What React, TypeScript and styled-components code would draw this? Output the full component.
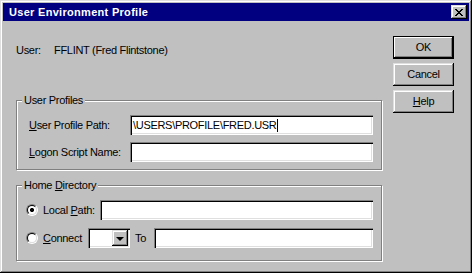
import React from "react";
import styled, { createGlobalStyle } from "styled-components";

const Global = createGlobalStyle`
  html, body { margin: 0; padding: 0; background: #ffffff; }
  body {
    font-family: "Liberation Sans", Arial, sans-serif;
    font-size: 11px;
    letter-spacing: -0.3px;
    color: #000;
  }
`;

const bevelOut = `
  box-shadow: inset -1px -1px 0 #000, inset 1px 1px 0 #dfdfdf,
    inset -2px -2px 0 #808080, inset 2px 2px 0 #fff;
`;
const bevelIn = `
  box-shadow: inset 1px 1px 0 #808080, inset 2px 2px 0 #000,
    inset -1px -1px 0 #fff, inset -2px -2px 0 #dfdfdf;
`;

const Window = styled.div`
  box-sizing: border-box;
  width: 472px;
  height: 273px;
  padding: 3px;
  background: #c0c0c0;
  display: flex;
  flex-direction: column;
  ${bevelOut}
`;

const TitleBar = styled.div`
  height: 18px;
  background: #000080;
  display: flex;
  align-items: center;
  justify-content: space-between;
  padding: 0 2px 0 6px;
`;

const Title = styled.span`
  color: #fff;
  font-weight: bold;
  font-size: 11px;
  letter-spacing: 0.3px;
  line-height: 13px;
`;

const CloseBtn = styled.div`
  width: 16px;
  height: 14px;
  background: #c0c0c0;
  display: flex;
  align-items: center;
  justify-content: center;
  ${bevelOut}
`;

const Body = styled.div`
  display: flex;
  gap: 11px;
  padding: 15px 0 0 13px;
`;

const LeftCol = styled.div`
  width: 366px;
  display: flex;
  flex-direction: column;
`;

const UserRow = styled.div`
  display: flex;
  padding-top: 8px;
  line-height: 13px;
`;

const UserLabel = styled.span`
  width: 38px;
`;

const Group = styled.fieldset<{ $top: number }>`
  margin: ${(p) => p.$top}px 0 0 0;
  padding: 0;
  min-width: 0;
  border: 1px solid #808080;
  box-shadow: 1px 1px 0 #fff, inset 1px 1px 0 #fff;
`;

const Legend = styled.legend`
  margin-left: 5px;
  padding: 0 2px;
  line-height: 13px;
  background: #c0c0c0;
`;

const ProfileGrid = styled.div`
  display: grid;
  grid-template-columns: 101px 1fr;
  row-gap: 7px;
  align-items: center;
  padding: 8px 8px 7px 12px;
`;

const FieldLabel = styled.span`
  line-height: 13px;
`;

const Field = styled.div`
  box-sizing: border-box;
  height: 20px;
  background: #fff;
  display: flex;
  align-items: center;
  padding: 0 3px;
  white-space: nowrap;
  ${bevelIn}
`;

const FlexField = styled(Field)`
  flex: 1;
`;

const Caret = styled.span`
  display: inline-block;
  width: 1px;
  height: 13px;
  margin-left: 1px;
  background: #000;
`;

const HomeRows = styled.div`
  display: flex;
  flex-direction: column;
  gap: 8px;
  padding: 8px 8px 12px 9px;
`;

const Row = styled.div`
  display: flex;
  align-items: center;
  height: 20px;
`;

const Radio = styled.span<{ $checked?: boolean }>`
  box-sizing: border-box;
  width: 12px;
  height: 12px;
  border-radius: 50%;
  border: 1px solid;
  border-color: #808080 #fff #fff #808080;
  margin-right: 5px;
  display: flex;
  align-items: center;
  justify-content: center;
  &::before {
    content: "";
    box-sizing: border-box;
    width: 10px;
    height: 10px;
    border-radius: 50%;
    border: 1px solid;
    border-color: #000 #dfdfdf #dfdfdf #000;
    background: #fff
      ${(p) =>
        p.$checked
          ? "radial-gradient(circle at 50% 50%, #000 0 2px, transparent 2.2px)"
          : "none"};
  }
`;

const RowLabel = styled.span<{ $w: number; $ml?: number }>`
  width: ${(p) => p.$w}px;
  margin-left: ${(p) => p.$ml || 0}px;
  line-height: 13px;
  flex: none;
`;

const Combo = styled.div`
  box-sizing: border-box;
  width: 42px;
  height: 20px;
  background: #fff;
  padding: 2px;
  display: flex;
  justify-content: flex-end;
  flex: none;
  ${bevelIn}
`;

const DropBtn = styled.div`
  width: 16px;
  height: 16px;
  background: #c0c0c0;
  display: flex;
  align-items: center;
  justify-content: center;
  ${bevelOut}
`;

const Arrow = styled.span`
  width: 0;
  height: 0;
  border-left: 4px solid transparent;
  border-right: 4px solid transparent;
  border-top: 4px solid #000;
  margin-top: 1px;
`;

const RightCol = styled.div`
  display: flex;
  flex-direction: column;
  gap: 4px;
`;

const Button = styled.div<{ $default?: boolean }>`
  box-sizing: border-box;
  width: 61px;
  height: 23px;
  background: #c0c0c0;
  display: flex;
  align-items: center;
  justify-content: center;
  line-height: 13px;
  ${(p) =>
    p.$default
      ? `border: 1px solid #000;
  box-shadow: inset -1px -1px 0 #000, inset 1px 1px 0 #fff, inset -2px -2px 0 #808080;`
      : bevelOut}
`;

const Key = styled.span`
  text-decoration: underline;
`;

export default function App() {
  return (
    <>
      <Global />
      <Window>
        <TitleBar>
          <Title>User Environment Profile</Title>
          <CloseBtn>
            <svg width="8" height="7" viewBox="0 0 8 7">
              <path
                d="M0 0h2v1h1v1h2V1h1V0h2v1H7v1H6v1H5v1h1v1h1v1h1v1H6V6H5V5H3v1H2v1H0V6h1V5h1V4h1V3H2V2H1V1H0z"
                fill="#000"
              />
            </svg>
          </CloseBtn>
        </TitleBar>
        <Body>
          <LeftCol>
            <UserRow>
              <UserLabel>User:</UserLabel>
              <span>FFLINT (Fred Flintstone)</span>
            </UserRow>
            <Group $top={37}>
              <Legend>User Profiles</Legend>
              <ProfileGrid>
                <FieldLabel>
                  <Key>U</Key>ser Profile Path:
                </FieldLabel>
                <Field>
                  \USERS\PROFILE\FRED.USR
                  <Caret />
                </Field>
                <FieldLabel>
                  <Key>L</Key>ogon Script Name:
                </FieldLabel>
                <Field />
              </ProfileGrid>
            </Group>
            <Group $top={9}>
              <Legend>
                Home <Key>D</Key>irectory
              </Legend>
              <HomeRows>
                <Row>
                  <Radio $checked />
                  <RowLabel $w={57}>
                    Local <Key>P</Key>ath:
                  </RowLabel>
                  <FlexField />
                </Row>
                <Row>
                  <Radio />
                  <RowLabel $w={45}>
                    <Key>C</Key>onnect
                  </RowLabel>
                  <Combo>
                    <DropBtn>
                      <Arrow />
                    </DropBtn>
                  </Combo>
                  <RowLabel $w={19} $ml={5}>
                    To
                  </RowLabel>
                  <FlexField />
                </Row>
              </HomeRows>
            </Group>
          </LeftCol>
          <RightCol>
            <Button $default>OK</Button>
            <Button>Cancel</Button>
            <Button>
              <Key>H</Key>elp
            </Button>
          </RightCol>
        </Body>
      </Window>
    </>
  );
}
